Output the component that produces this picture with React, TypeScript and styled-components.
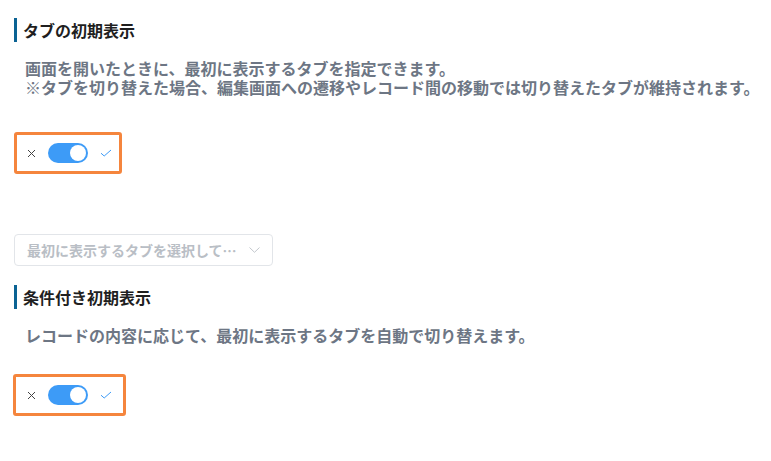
import { FC } from 'react';
import styled, { createGlobalStyle } from 'styled-components';

const GlobalStyle = createGlobalStyle`
  body {
    margin: 0;
    background: #fff;
    font-family: "Noto Sans CJK JP", "Noto Sans", sans-serif;
  }
`;

const Page = styled.div`
  padding: 18px 0 40px 14px;
`;

const SectionTitle = styled.h2<{ $top?: number }>`
  margin: ${(p) => p.$top ?? 0}px 0 0;
  border-left: 3px solid #0b6394;
  padding-left: 6px;
  font-size: 16px;
  font-weight: 700;
  line-height: 24px;
  color: #1f1f1f;
`;

const Description = styled.p`
  margin: 17px 0 0;
  padding-left: 11px;
  font-size: 16px;
  font-weight: 700;
  line-height: 19px;
  color: #6d7684;
`;

const ToggleFrame = styled.div<{ $wide?: boolean; $gap: number }>`
  box-sizing: border-box;
  width: ${(p) => (p.$wide ? 113 : 108)}px;
  height: 42px;
  margin-top: ${(p) => p.$gap}px;
  margin-left: ${(p) => (p.$wide ? -1 : 0)}px;
  border: 3px solid #f5853d;
  border-radius: 3px;
  display: flex;
  align-items: center;
  padding-left: ${(p) => (p.$wide ? 11 : 10)}px;
  gap: 12px;
`;

const Track = styled.span`
  width: 40px;
  height: 20px;
  border-radius: 10px;
  background: #3d9bf7;
  display: flex;
  align-items: center;
  justify-content: flex-end;
  padding: 0 2px;
  box-sizing: border-box;
`;

const Knob = styled.span`
  width: 16px;
  height: 16px;
  border-radius: 50%;
  background: #fff;
`;

const Select = styled.div`
  box-sizing: border-box;
  width: 259px;
  height: 32px;
  margin-top: 60px;
  border: 1px solid #e2e5e9;
  border-radius: 4px;
  display: flex;
  align-items: center;
  justify-content: space-between;
  padding: 0 12px;
  font-size: 14px;
  font-weight: 700;
  color: #b9bec5;
`;

const Toggle: FC<{ wide?: boolean; gap: number }> = ({ wide, gap }) => (
  <ToggleFrame $wide={wide} $gap={gap}>
    <svg width="9" height="9" viewBox="0 0 9 9">
      <path d="M1 1 L8 8 M8 1 L1 8" stroke="#444" strokeWidth="1" fill="none" />
    </svg>
    <Track>
      <Knob />
    </Track>
    <svg width="12" height="8" viewBox="0 0 12 8">
      <path d="M1 4.2 L4.2 7 L11 1" stroke="#3d9bf7" strokeWidth="1" fill="none" />
    </svg>
  </ToggleFrame>
);

const App: FC = () => (
  <>
    <GlobalStyle />
    <Page>
      <SectionTitle>タブの初期表示</SectionTitle>
      <Description>
        画面を開いたときに、最初に表示するタブを指定できます。
        <br />
        ※タブを切り替えた場合、編集画面への遷移やレコード間の移動では切り替えたタブが維持されます。
      </Description>
      <Toggle gap={35} />
      <Select>
        <span>最初に表示するタブを選択して…</span>
        <svg width="11" height="6" viewBox="0 0 11 6">
          <path d="M0.5 0.5 L5.5 5.3 L10.5 0.5" stroke="#c3c7cd" strokeWidth="1" fill="none" />
        </svg>
      </Select>
      <SectionTitle $top={19}>条件付き初期表示</SectionTitle>
      <Description>レコードの内容に応じて、最初に表示するタブを自動で切り替えます。</Description>
      <Toggle wide gap={29} />
    </Page>
  </>
);

export default App;
